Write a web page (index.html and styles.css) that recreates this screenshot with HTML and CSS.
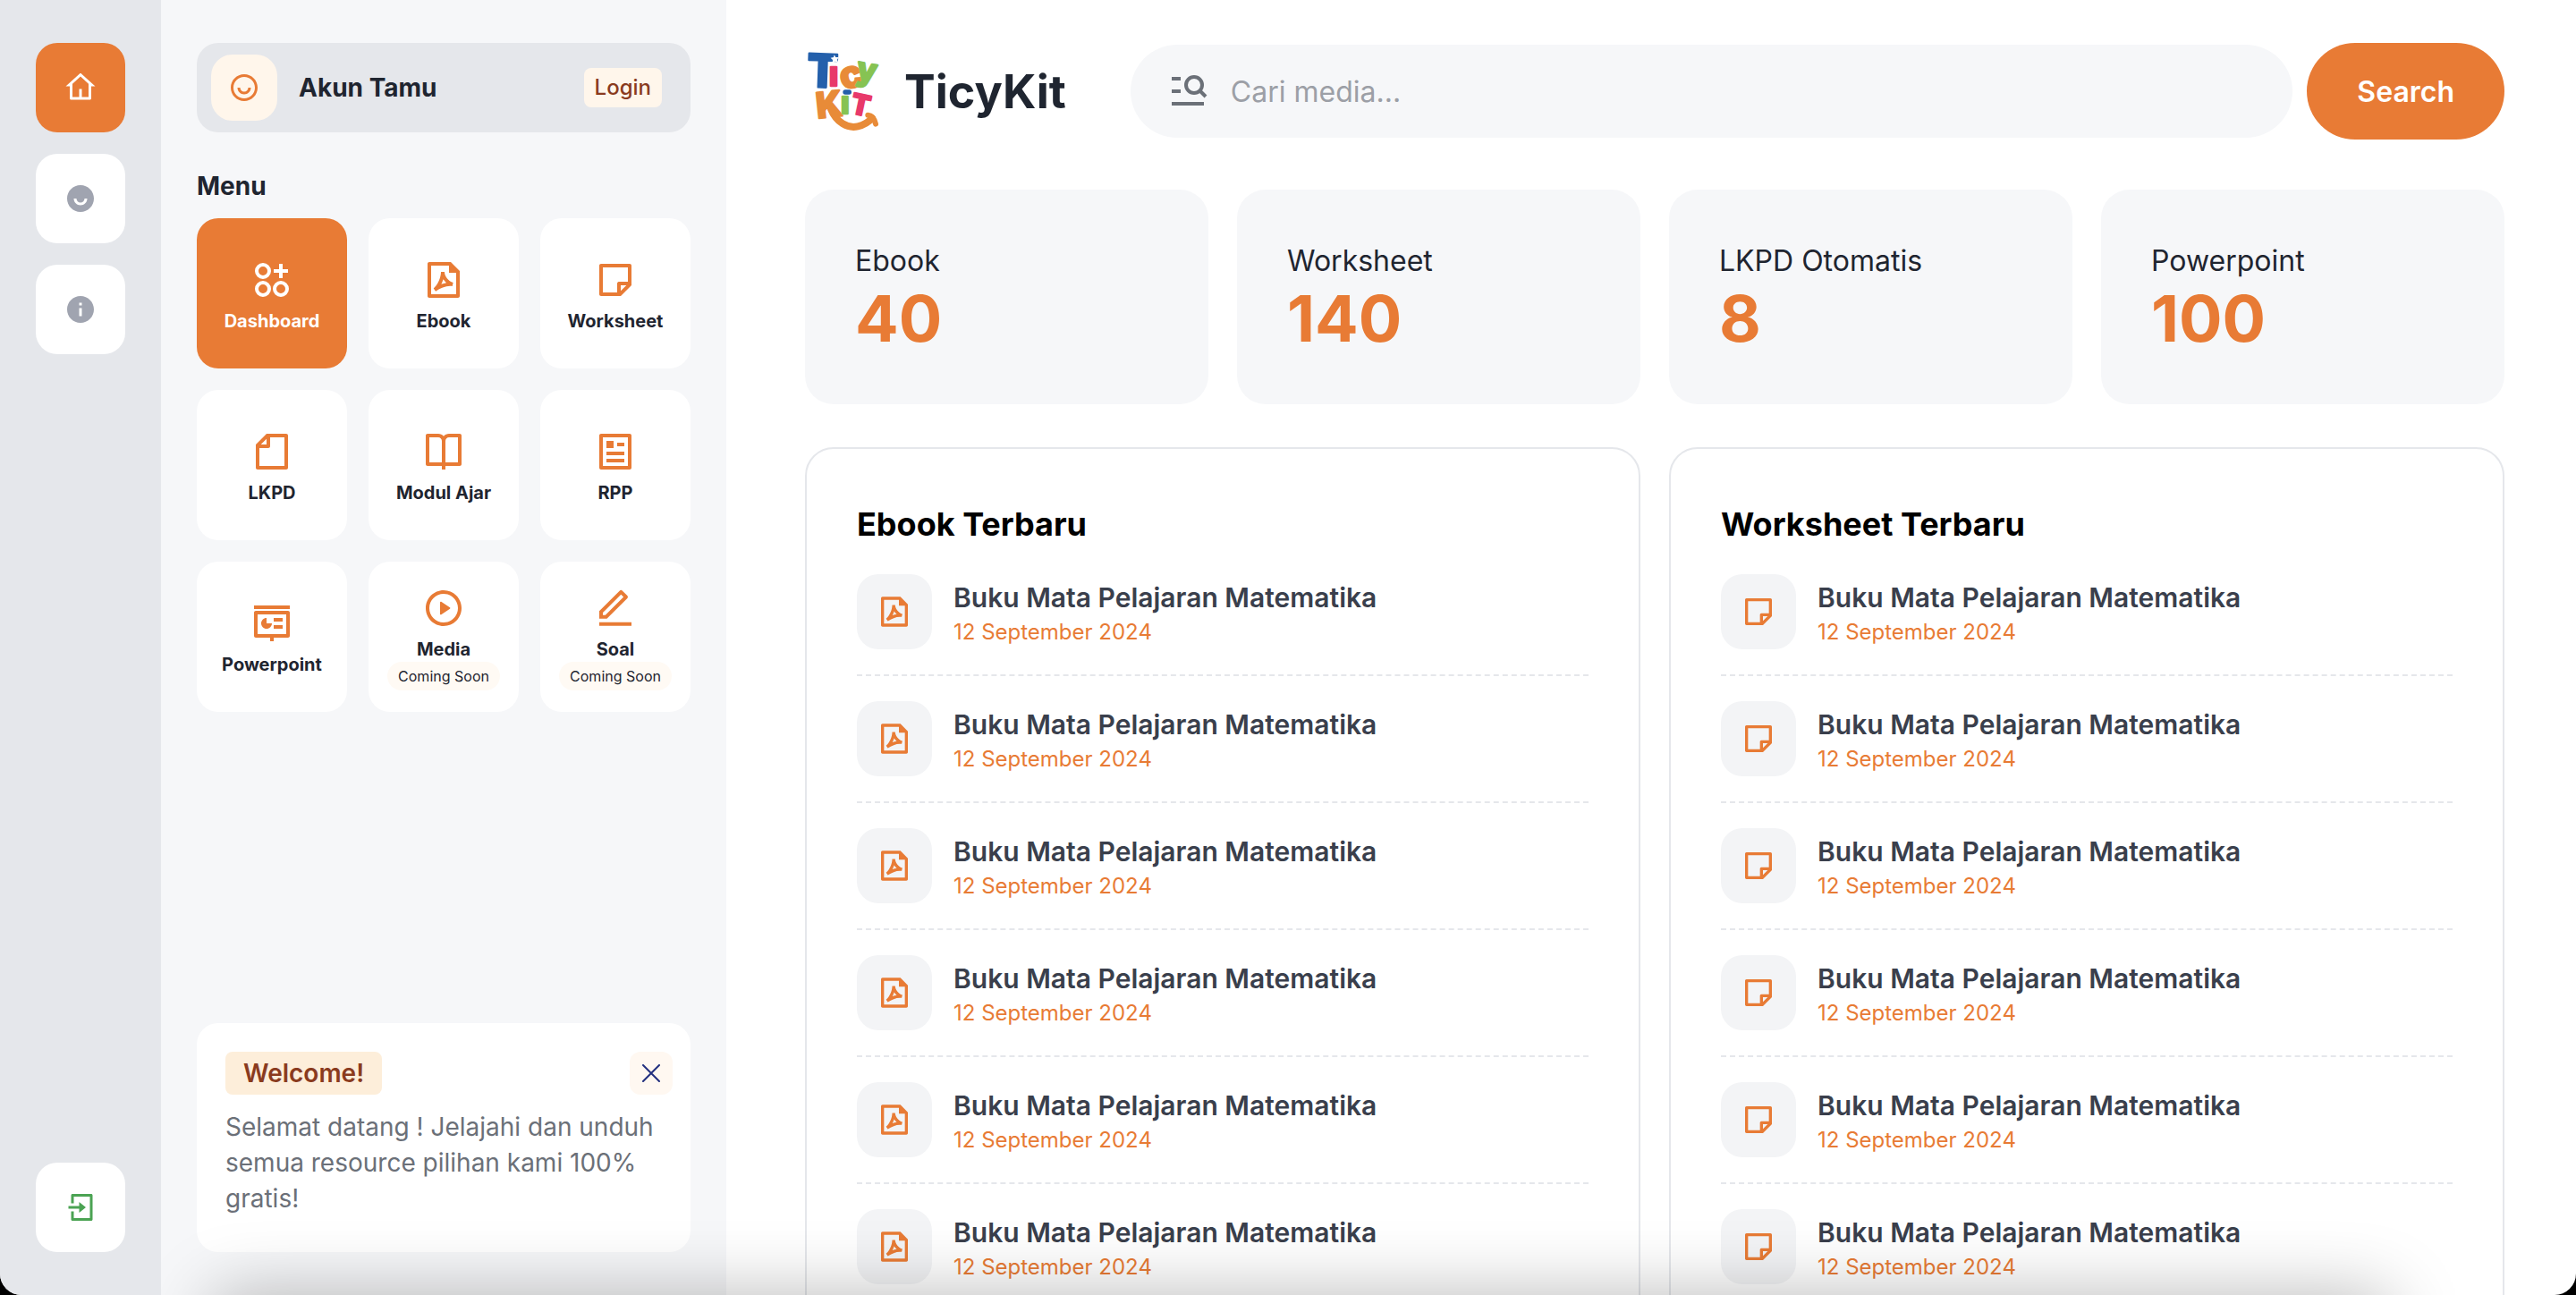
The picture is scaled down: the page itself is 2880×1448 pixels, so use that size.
FILE: index.html
```html
<!DOCTYPE html>
<html lang="id">
<head>
<meta charset="utf-8">
<meta name="viewport" content="width=device-width, initial-scale=1">
<title>TicyKit</title>
<link rel="stylesheet" href="styles.css">
</head>
<body>
<svg class="sprite" aria-hidden="true">
  <symbol id="pdf" viewBox="0 0 24 24"><path d="M5 4H15V8H19V20H5V4ZM3.9985 2C3.44749 2 3 2.44405 3 2.9918V21.0082C3 21.5447 3.44476 22 3.9934 22H20.0066C20.5551 22 21 21.5489 21 20.9925L20.9997 7L16 2H3.9985ZM10.4999 7.5C10.4999 9.07749 10.0442 10.9373 9.27493 12.6534C8.50287 14.3757 7.46143 15.8502 6.37524 16.7191L7.55464 18.3321C10.4821 16.3804 13.7233 15.0421 16.8585 15.49L17.3162 13.5513C14.6435 12.6604 12.4999 9.98994 12.4999 7.5H10.4999ZM11.0999 13.4716C11.3673 12.8752 11.6042 12.2563 11.8037 11.6285C12.2753 12.3531 12.8553 13.0182 13.5101 13.5953C12.5283 13.7711 11.5665 14.0596 10.6352 14.4276C10.7999 14.1143 10.9551 13.7948 11.0999 13.4716Z"/></symbol>
  <symbol id="note" viewBox="0 0 24 24"><path d="M21 15L15 20.996L4.00221 21C3.4487 21 3 20.5551 3 20.0066V3.9934C3 3.44476 3.44495 3 3.9934 3H20.0066C20.5552 3 21 3.45576 21 4.00247V15ZM19 5H5V19H13V14C13 13.4872 13.386 13.0645 13.8834 13.0067L14 13L19 12.999V5ZM18.171 14.999L15 15V18.169L18.171 14.999Z"/></symbol>
</svg>
<div class="shell">
  <nav class="rail" aria-label="Navigasi utama">
    <a class="rail-link active" href="#" aria-label="Beranda"><svg class="icon-sm" viewBox="0 0 24 24"><path d="M19 21H5C4.44772 21 4 20.5523 4 20V11L1 11L11.3273 1.6115C11.7087 1.26475 12.2913 1.26475 12.6727 1.6115L23 11L20 11V20C20 20.5523 19.5523 21 19 21ZM13 19H18V9.15745L12 3.7029L6 9.15745V19H11V13H13V19Z"/></svg></a>
    <a class="rail-link" href="#" aria-label="Akun"><svg class="icon-sm" viewBox="0 0 24 24"><path d="M12 22C6.47715 22 2 17.5228 2 12C2 6.47715 6.47715 2 12 2C17.5228 2 22 6.47715 22 12C22 17.5228 17.5228 22 12 22ZM7 12C7 14.7614 9.23858 17 12 17C14.7614 17 17 14.7614 17 12H15C15 13.6569 13.6569 15 12 15C10.3431 15 9 13.6569 9 12H7Z"/></svg></a>
    <a class="rail-link" href="#" aria-label="Informasi"><svg class="icon-sm" viewBox="0 0 24 24"><path d="M12 22C6.47715 22 2 17.5228 2 12C2 6.47715 6.47715 2 12 2C17.5228 2 22 6.47715 22 12C22 17.5228 17.5228 22 12 22ZM11 11V17H13V11H11ZM11 7V9H13V7H11Z"/></svg></a>
    <a class="rail-link enter" href="#" aria-label="Masuk"><svg class="icon-sm" viewBox="0 0 24 24"><path d="M5 15H7V20H19V4H7V9H5V3C5 2.44772 5.44772 2 6 2H20C20.5523 2 21 2.44772 21 3V21C21 21.5523 20.5523 22 20 22H6C5.44772 22 5 21.5523 5 21V15ZM11 11V8L16 12L11 16V13H3V11H11Z"/></svg></a>
  </nav>

  <aside class="sidebar">
    <div class="account">
      <span class="avatar"><svg class="icon-sm" viewBox="0 0 24 24"><path d="M12 22C6.47715 22 2 17.5228 2 12C2 6.47715 6.47715 2 12 2C17.5228 2 22 6.47715 22 12C22 17.5228 17.5228 22 12 22ZM12 20C16.4183 20 20 16.4183 20 12C20 7.58172 16.4183 4 12 4C7.58172 4 4 7.58172 4 12C4 16.4183 7.58172 20 12 20ZM7 12H9C9 13.6569 10.3431 15 12 15C13.6569 15 15 13.6569 15 12H17C17 14.7614 14.7614 17 12 17C9.23858 17 7 14.7614 7 12Z"/></svg></span>
      <span class="account-name">Akun Tamu</span>
      <a class="login" href="#">Login</a>
    </div>
    <h2 class="menu-title">Menu</h2>
    <nav class="menu" aria-label="Menu">
      <a class="tile active" href="#"><svg class="icon" viewBox="0 0 24 24"><g fill="none" stroke="currentColor" stroke-width="2"><circle cx="7" cy="7" r="3.5"/><circle cx="7" cy="17" r="3.5"/><circle cx="17" cy="17" r="3.5"/><path d="M17 3V11M13 7H21"/></g></svg><span>Dashboard</span></a>
      <a class="tile" href="#"><svg class="icon"><use href="#pdf"/></svg><span>Ebook</span></a>
      <a class="tile" href="#"><svg class="icon"><use href="#note"/></svg><span>Worksheet</span></a>
      <a class="tile" href="#"><svg class="icon" viewBox="0 0 24 24"><path d="M9 2.00318V2H19.9978C20.5513 2 21 2.45531 21 2.9918V21.0082C21 21.5447 20.5551 22 20.0066 22H3.9934C3.44476 22 3 21.5501 3 20.9932V8L9 2.00318ZM5.82918 8H9V4.83086L5.82918 8ZM11 4V9C11 9.55228 10.5523 10 10 10H5V20H19V4H11Z"/></svg><span>LKPD</span></a>
      <a class="tile" href="#"><svg class="icon" viewBox="0 0 24 24"><path d="M13 20V22H11V20H3C2.44772 20 2 19.5523 2 19V3C2 2.44772 2.44772 2 3 2H9C10.1947 2 11.2671 2.52375 12 3.35418C12.7329 2.52375 13.8053 2 15 2H21C21.5523 2 22 2.44772 22 3V19C22 19.5523 21.5523 20 21 20H13ZM20 18V4H15C13.8954 4 13 4.89543 13 6V18H20ZM11 18V6C11 4.89543 10.1046 4 9 4H4V18H11Z"/></svg><span>Modul Ajar</span></a>
      <a class="tile" href="#"><svg class="icon" viewBox="0 0 24 24"><path d="M20 22H4C3.44772 22 3 21.5523 3 21V3C3 2.44772 3.44772 2 4 2H20C20.5523 2 21 2.44772 21 3V21C21 21.5523 20.5523 22 20 22ZM19 20V4H5V20H19ZM7 6H11V10H7V6ZM7 12H17V14H7V12ZM7 16H17V18H7V16ZM13 7H17V9H13V7Z"/></svg><span>RPP</span></a>
      <a class="tile" href="#"><svg class="icon" viewBox="0 0 24 24"><path d="M2 2H22V4H2V2ZM3 5H21C21.5523 5 22 5.44772 22 6V19C22 19.5523 21.5523 20 21 20H13V22H11V20H3C2.44772 20 2 19.5523 2 19V6C2 5.44772 2.44772 5 3 5ZM4 7V18H20V7H4ZM13 9H18V11H13V9ZM13 13H18V15H13V13ZM9 9V12H12C12 13.6569 10.6569 15 9 15C7.34315 15 6 13.6569 6 12C6 10.3431 7.34315 9 9 9Z"/></svg><span>Powerpoint</span></a>
      <a class="tile" href="#"><svg class="icon" viewBox="0 0 24 24"><path d="M12 22C6.47715 22 2 17.5228 2 12C2 6.47715 6.47715 2 12 2C17.5228 2 22 6.47715 22 12C22 17.5228 17.5228 22 12 22ZM12 20C16.4183 20 20 16.4183 20 12C20 7.58172 16.4183 4 12 4C7.58172 4 4 7.58172 4 12C4 16.4183 7.58172 20 12 20ZM10.6219 8.41459L15.5008 11.6672C15.6846 11.7897 15.7343 12.0381 15.6117 12.2219C15.5824 12.2658 15.5447 12.3035 15.5008 12.3328L10.6219 15.5854C10.4381 15.708 10.1897 15.6583 10.0672 15.4745C10.0234 15.4088 10 15.3316 10 15.2526V8.74741C10 8.52649 10.1791 8.34741 10.4 8.34741C10.479 8.34741 10.5562 8.37078 10.6219 8.41459Z"/></svg><span>Media</span><small class="soon">Coming Soon</small></a>
      <a class="tile" href="#"><svg class="icon" viewBox="0 0 24 24"><path d="M6.41421 15.89L16.5563 5.74786L15.1421 4.33365L5 14.4758V15.89H6.41421ZM7.24264 17.89H3V13.6473L14.435 2.21233C14.8256 1.8218 15.4587 1.8218 15.8492 2.21233L18.6777 5.04075C19.0682 5.43128 19.0682 6.06444 18.6777 6.45497L7.24264 17.89ZM3 19.89H21V21.89H3V19.89Z"/></svg><span>Soal</span><small class="soon">Coming Soon</small></a>
    </nav>
    <section class="welcome">
      <div class="welcome-head">
        <strong class="welcome-badge">Welcome!</strong>
        <button class="close" type="button" aria-label="Tutup"><svg viewBox="0 0 20 20" fill="none" stroke="currentColor" stroke-width="2" stroke-linecap="round"><path d="M1 1L19 19M19 1L1 19"/></svg></button>
      </div>
      <p>Selamat datang ! Jelajahi dan unduh semua resource pilihan kami 100% gratis!</p>
    </section>
  </aside>

  <main class="main">
    <header class="header">
      <a class="brand" href="#">
        <svg class="logo" viewBox="0 0 240 264" aria-hidden="true">
          <g class="logo-letters">
            <text class="blue" x="-2" y="119" font-size="154" transform="rotate(2 50 60)">T</text>
            <text class="pink" x="71" y="113" font-size="112">ı</text>
            <text class="orange" x="108" y="119" font-size="126" transform="rotate(-14 146 84)">c</text>
            <text class="green" x="162" y="98" font-size="108" transform="rotate(10 200 80)">y</text>
            <text class="orange" x="28" y="220" font-size="118" transform="rotate(-6 60 180)">K</text>
            <text class="green" x="111" y="208" font-size="102">ı</text>
            <text class="pink" x="146" y="213" font-size="94" transform="rotate(12 184 180)">T</text>
          </g>
          <path d="M78 192C96 236 134 258 168 250C190 245 206 234 216 222" fill="none" stroke="#e88b38" stroke-width="24" stroke-linecap="round"/>
          <path d="M202 212C216 213 224 224 228 242" fill="none" stroke="#e88b38" stroke-width="18" stroke-linecap="round"/>
          <rect x="118" y="127" width="29" height="16" rx="8" fill="#2460ab"/>
          <path d="M89 10L94 18L104 18L99 26L102 35L92 32L83 37L84 27L77 20L87 18Z" fill="#fff"/>
        </svg>
        <span class="brand-name">TicyKit</span>
      </a>
      <form class="search" role="search">
        <label class="search-box">
          <svg class="icon" viewBox="0 0 24 24" fill="none" stroke="currentColor" stroke-width="2" aria-hidden="true"><path d="M3 5H8M3 12H8M3 19H21M19 12L22 15"/><circle cx="15.5" cy="8.5" r="4.5"/></svg>
          <input type="search" placeholder="Cari media..." aria-label="Cari media">
        </label>
        <button class="search-button" type="button">Search</button>
      </form>
    </header>

    <section class="stats" aria-label="Statistik">
      <div class="stat"><span>Ebook</span><strong>40</strong></div>
      <div class="stat"><span>Worksheet</span><strong>140</strong></div>
      <div class="stat"><span>LKPD Otomatis</span><strong>8</strong></div>
      <div class="stat"><span>Powerpoint</span><strong>100</strong></div>
    </section>

    <div class="panels">
      <section class="panel">
        <h2>Ebook Terbaru</h2>
        <ul>
          <li><span class="thumb"><svg><use href="#pdf"/></svg></span><div><h3>Buku Mata Pelajaran Matematika</h3><time datetime="2024-09-12">12 September 2024</time></div></li>
          <li><span class="thumb"><svg><use href="#pdf"/></svg></span><div><h3>Buku Mata Pelajaran Matematika</h3><time datetime="2024-09-12">12 September 2024</time></div></li>
          <li><span class="thumb"><svg><use href="#pdf"/></svg></span><div><h3>Buku Mata Pelajaran Matematika</h3><time datetime="2024-09-12">12 September 2024</time></div></li>
          <li><span class="thumb"><svg><use href="#pdf"/></svg></span><div><h3>Buku Mata Pelajaran Matematika</h3><time datetime="2024-09-12">12 September 2024</time></div></li>
          <li><span class="thumb"><svg><use href="#pdf"/></svg></span><div><h3>Buku Mata Pelajaran Matematika</h3><time datetime="2024-09-12">12 September 2024</time></div></li>
          <li><span class="thumb"><svg><use href="#pdf"/></svg></span><div><h3>Buku Mata Pelajaran Matematika</h3><time datetime="2024-09-12">12 September 2024</time></div></li>
        </ul>
      </section>
      <section class="panel">
        <h2>Worksheet Terbaru</h2>
        <ul>
          <li><span class="thumb"><svg><use href="#note"/></svg></span><div><h3>Buku Mata Pelajaran Matematika</h3><time datetime="2024-09-12">12 September 2024</time></div></li>
          <li><span class="thumb"><svg><use href="#note"/></svg></span><div><h3>Buku Mata Pelajaran Matematika</h3><time datetime="2024-09-12">12 September 2024</time></div></li>
          <li><span class="thumb"><svg><use href="#note"/></svg></span><div><h3>Buku Mata Pelajaran Matematika</h3><time datetime="2024-09-12">12 September 2024</time></div></li>
          <li><span class="thumb"><svg><use href="#note"/></svg></span><div><h3>Buku Mata Pelajaran Matematika</h3><time datetime="2024-09-12">12 September 2024</time></div></li>
          <li><span class="thumb"><svg><use href="#note"/></svg></span><div><h3>Buku Mata Pelajaran Matematika</h3><time datetime="2024-09-12">12 September 2024</time></div></li>
          <li><span class="thumb"><svg><use href="#note"/></svg></span><div><h3>Buku Mata Pelajaran Matematika</h3><time datetime="2024-09-12">12 September 2024</time></div></li>
        </ul>
      </section>
    </div>
  </main>
  <div class="bottom-shade" aria-hidden="true"></div>
</div>
</body>
</html>
```
FILE: styles.css
```css
:root {
  --orange: #e87b35;
  --ink: #1f2530;
  --surface: #f6f7f9;
  --line: #e5e7eb;
  --cream: #fff6eb;
  --rust: #8a3b1e;
}

* { box-sizing: border-box; }

html { background: #000; }

body {
  margin: 0;
  font-family: Inter, "Liberation Sans", sans-serif;
  color: var(--ink);
}

h2, h3, p, ul { margin: 0; padding: 0; }
ul { list-style: none; }
a { color: inherit; text-decoration: none; }
button, input { font: inherit; border: 0; }
svg { display: block; fill: currentColor; }
.sprite { display: none; }
.icon { width: 48px; height: 48px; }
.icon-sm { width: 36px; height: 36px; }

.shell {
  position: relative;
  display: grid;
  grid-template-columns: 180px 632px minmax(0, 1fr);
  grid-template-rows: minmax(0, 1fr);
  height: 100vh;
  overflow: hidden;
  background: #fff;
  border-radius: 0 0 24px 24px;
}

/* Icon rail */
.rail {
  position: relative;
  z-index: 2;
  display: flex;
  flex-direction: column;
  align-items: center;
  gap: 24px;
  padding: 48px 0;
  background: var(--line);
}
.rail-link {
  display: grid;
  place-items: center;
  width: 100px;
  height: 100px;
  border-radius: 24px;
  background: #fff;
  color: #a0a4b0;
}
.rail-link.active { background: var(--orange); color: #fff; }
.rail-link.enter { margin-top: auto; color: #4ba353; }

/* Sidebar */
.sidebar {
  display: flex;
  flex-direction: column;
  padding: 48px 40px;
  background: var(--surface);
}
.account {
  display: flex;
  align-items: center;
  gap: 24px;
  height: 100px;
  padding: 0 32px 0 16px;
  border-radius: 24px;
  background: var(--line);
}
.avatar {
  display: grid;
  place-items: center;
  width: 74px;
  height: 74px;
  border-radius: 24px;
  background: var(--cream);
  color: var(--orange);
}
.account-name { flex: 1; font-size: 28px; font-weight: 700; }
.login {
  padding: 6px 12px;
  border-radius: 8px;
  background: var(--cream);
  color: var(--rust);
  font-size: 24px;
  line-height: 32px;
  font-weight: 500;
}
.menu-title {
  margin: 40px 0 16px;
  font-size: 28px;
  line-height: 40px;
  font-weight: 700;
}
.menu {
  display: grid;
  grid-template-columns: repeat(3, 1fr);
  grid-auto-rows: 168px;
  gap: 24px;
}
.tile {
  display: flex;
  flex-direction: column;
  align-items: center;
  justify-content: center;
  padding-top: 4px;
  border-radius: 24px;
  background: #fff;
  font-size: 20px;
  line-height: 24px;
  font-weight: 700;
}
.tile .icon { margin-bottom: 10px; color: var(--orange); }
.tile.active { background: var(--orange); color: #fff; }
.tile.active .icon { color: #fff; }
.soon {
  margin-top: 2px;
  padding: 0 12px;
  border-radius: 16px;
  background: #fffaf4;
  font-size: 16px;
  line-height: 32px;
  font-weight: 400;
}
.welcome {
  margin-top: auto;
  padding: 32px 20px 40px 32px;
  border-radius: 24px;
  background: #fff;
}
.welcome-head {
  display: flex;
  justify-content: space-between;
  margin-bottom: 16px;
}
.welcome-badge {
  padding: 0 20px;
  border-radius: 8px;
  background: #fdeeda;
  color: var(--rust);
  font-size: 28px;
  line-height: 48px;
  font-weight: 600;
}
.close {
  display: grid;
  place-items: center;
  width: 48px;
  height: 48px;
  padding: 0;
  border-radius: 12px;
  background: #fff8f1;
  color: #22307f;
}
.close svg { width: 20px; height: 20px; fill: none; }
.welcome p { color: #6b7078; font-size: 28px; line-height: 40px; }

/* Main column */
.main {
  display: flex;
  flex-direction: column;
  min-width: 0;
  padding: 48px 80px 48px 88px;
}
.header {
  display: flex;
  flex-shrink: 0;
  align-items: center;
  gap: 72px;
  height: 108px;
}
.brand { display: flex; align-items: center; gap: 28px; }
.logo { width: 80px; height: 88px; margin-left: 3px; overflow: visible; }
.logo-letters { font-weight: 800; stroke-width: 7px; stroke-linejoin: round; }
.blue { fill: #2460ab; stroke: #2460ab; }
.pink { fill: #e8396a; stroke: #e8396a; }
.orange { fill: #e88b38; stroke: #e88b38; }
.green { fill: #86c353; stroke: #86c353; }
.brand-name { font-size: 52px; font-weight: 700; }
.search { display: flex; flex: 1; align-items: center; gap: 16px; }
.search-box {
  display: flex;
  flex: 1;
  align-items: center;
  gap: 24px;
  height: 104px;
  padding: 0 40px;
  border-radius: 52px;
  background: var(--surface);
  color: #6b7078;
}
.search-box .icon { fill: none; }
.search-box input {
  flex: 1;
  min-width: 0;
  padding: 0;
  background: transparent;
  color: var(--ink);
  font-size: 32px;
  outline: 0;
}
.search-box input::placeholder { color: #9c9fa6; }
.search-button {
  height: 108px;
  padding: 0 56px;
  border-radius: 54px;
  background: var(--orange);
  color: #fff;
  font-size: 32px;
  font-weight: 600;
}
.stats {
  display: grid;
  grid-template-columns: repeat(4, 1fr);
  flex-shrink: 0;
  gap: 32px;
  margin-top: 56px;
}
.stat {
  display: flex;
  flex-direction: column;
  padding: 56px;
  border-radius: 32px;
  background: var(--surface);
}
.stat span { font-size: 32px; line-height: 48px; }
.stat strong {
  color: var(--orange);
  font-size: 72px;
  line-height: 80px;
  font-weight: 700;
}
.panels {
  display: grid;
  grid-template-columns: repeat(2, 1fr);
  flex-shrink: 0;
  gap: 32px;
  margin-top: 48px;
}
.panel {
  padding: 56px;
  border: 2px solid var(--line);
  border-radius: 32px;
}
.panel h2 {
  margin-bottom: 28px;
  color: #000;
  font-size: 36px;
  line-height: 56px;
  font-weight: 700;
}
.panel ul { display: grid; gap: 28px; }
.panel li {
  display: flex;
  align-items: center;
  gap: 24px;
  padding-bottom: 28px;
  border-bottom: 2px dashed var(--line);
}
.thumb {
  display: grid;
  place-items: center;
  width: 84px;
  height: 84px;
  border-radius: 24px;
  background: #f3f4f6;
  color: var(--orange);
}
.thumb svg { width: 40px; height: 40px; }
.panel h3 {
  color: #3a3f4c;
  font-size: 30px;
  line-height: 46px;
  font-weight: 600;
}
.panel time {
  display: block;
  color: var(--orange);
  font-size: 24px;
  line-height: 32px;
}

/* Soft shade cast upward from the lower edge */
.bottom-shade {
  position: absolute;
  z-index: 1;
  top: 100%;
  left: 240px;
  right: 210px;
  height: 100px;
  box-shadow: 0 0 80px rgba(0, 0, 0, 0.28);
  pointer-events: none;
}
```
